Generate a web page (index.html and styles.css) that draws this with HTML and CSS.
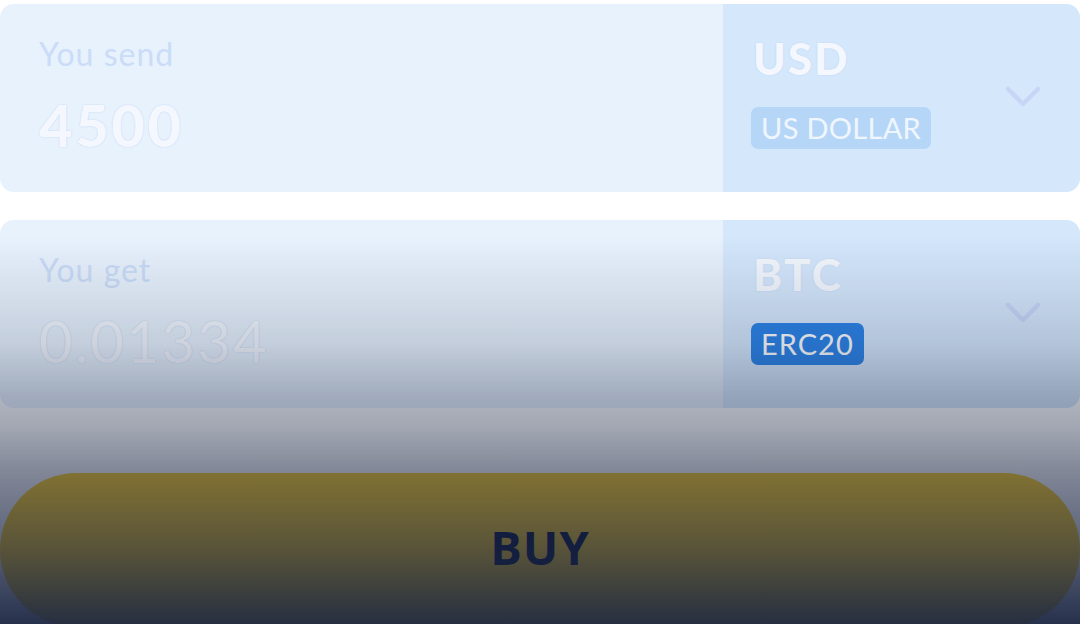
FILE: index.html
```html
<!DOCTYPE html>
<html lang="en">
<head>
  <meta charset="UTF-8">
  <meta name="viewport" content="width=device-width, initial-scale=1.0">
  <title>Buy Crypto</title>
  <link rel="stylesheet" href="styles.css">
</head>
<body>
  <main class="exchange">
    <!-- amount the user pays -->
    <section class="field">
      <div class="field-amount">
        <span class="field-label">You send</span>
        <span class="field-value">4500</span>
      </div>
      <div class="field-currency">
        <div class="currency-info">
          <span class="currency-code">USD</span>
          <span class="currency-tag">US DOLLAR</span>
        </div>
        <svg class="chevron" width="36" height="22" viewBox="0 0 36 22">
          <polyline points="3,3 18,18 33,3"></polyline>
        </svg>
      </div>
    </section>

    <!-- amount the user receives -->
    <section class="field">
      <div class="field-amount">
        <span class="field-label">You get</span>
        <span class="field-value field-value-light">0.01334</span>
      </div>
      <div class="field-currency">
        <div class="currency-info">
          <span class="currency-code">BTC</span>
          <span class="currency-tag currency-tag-network">ERC20</span>
        </div>
        <svg class="chevron" width="36" height="22" viewBox="0 0 36 22">
          <polyline points="3,3 18,18 33,3"></polyline>
        </svg>
      </div>
    </section>

    <button type="button" class="buy-button">BUY</button>
  </main>
</body>
</html>
```

FILE: styles.css
```css
body {
  margin: 0;
  background: #fff;
  font-family: Lato, "Noto Sans", sans-serif;
  overflow: hidden;
}
/* fade to dark over the lower part of the sheet */
body::after {
  content: "";
  position: fixed;
  top: 0;
  left: 0;
  right: 0;
  bottom: 0;
  pointer-events: none;
  background: linear-gradient(to bottom,
    rgba(27, 38, 67, 0) 236px,
    rgba(27, 38, 67, 0.04) 260px,
    rgba(27, 38, 67, 0.1) 300px,
    rgba(27, 38, 67, 0.18) 345px,
    rgba(27, 38, 67, 0.34) 395px,
    rgba(27, 38, 67, 0.4) 425px,
    rgba(27, 38, 67, 0.55) 470px,
    rgba(27, 38, 67, 0.72) 545px,
    rgba(27, 38, 67, 0.95) 624px);
}
.exchange {
  display: flex;
  flex-direction: column;
  padding-top: 4px;
}
.field {
  display: flex;
  height: 188px;
  border-radius: 14px;
  overflow: hidden;
  background: #e8f2fd;
}
.field + .field {
  margin-top: 28px;
}
.field-amount {
  flex: 1;
  display: flex;
  flex-direction: column;
  padding: 34px 0 0 39px;
}
.field-label {
  font-size: 32px;
  line-height: 1;
  letter-spacing: 1px;
  color: #cadcf7;
}
.field-value {
  margin-top: 26px;
  font-size: 58px;
  font-weight: 900;
  line-height: 1;
  letter-spacing: 2.5px;
  color: #f4f8fe;
  text-shadow: 0 0 1.5px #b0c9ef;
}
.field-value-light {
  font-weight: 400;
  letter-spacing: 2px;
}
.field-currency {
  width: 357px;
  box-sizing: border-box;
  display: flex;
  align-items: center;
  padding: 0 39px 0 28px;
  background: #d4e7fb;
}
.currency-info {
  flex: 1;
  align-self: flex-start;
  display: flex;
  flex-direction: column;
  align-items: flex-start;
  padding-top: 32px;
}
.currency-code {
  margin-left: 2px;
  font-size: 44px;
  font-weight: 900;
  line-height: 1;
  letter-spacing: 2px;
  color: #f4f8fe;
  text-shadow: 0 0 1.5px #b8cff2;
}
.currency-tag {
  margin-top: 27px;
  height: 42px;
  line-height: 42px;
  padding: 0 10px;
  border-radius: 7px;
  font-size: 29px;
  letter-spacing: 0.3px;
  background: #b6d6f8;
  color: #f0f6fe;
}
.currency-tag-network {
  background: #2a82e6;
  color: #fff;
  letter-spacing: 1px;
}
.chevron {
  display: block;
  margin-top: -2px;
}
.chevron polyline {
  fill: none;
  stroke: #c7d6f7;
  stroke-width: 4.5;
  stroke-linecap: round;
  stroke-linejoin: round;
}
.buy-button {
  margin-top: 65px;
  height: 154px;
  width: 100%;
  border: none;
  border-radius: 77px;
  background: #ffcf1f;
  color: #020a36;
  font-family: "Open Sans", sans-serif;
  font-size: 47px;
  font-weight: 700;
  letter-spacing: 1px;
  padding: 0 0 6px;
  cursor: pointer;
}
```
